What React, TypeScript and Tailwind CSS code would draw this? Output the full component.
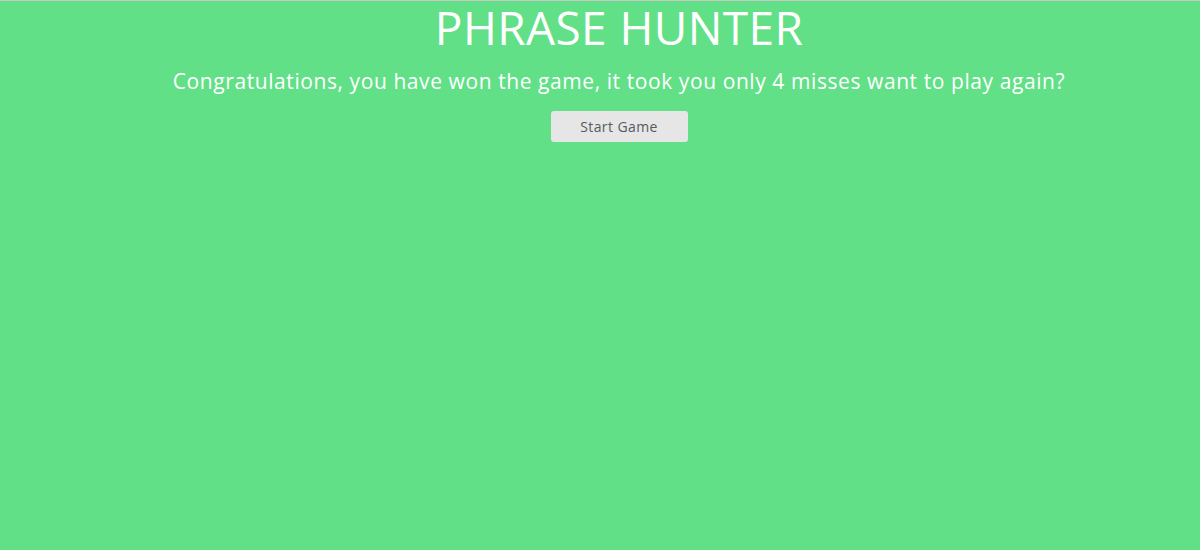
export default function App() {
  return (
    <div className="w-[1200px] h-[550px] bg-[#62e087] border-t border-[#c8c8c8] pl-[38px] flex flex-col items-center" style={{ fontFamily: '"Open Sans", sans-serif' }}>
      <h1 className="mt-[1px] text-[46px] leading-[50px] text-white font-normal tracking-[0.4px]">PHRASE HUNTER</h1>
      <p className="mt-[13px] text-[21px] leading-[32px] text-white tracking-[0.58px]">Congratulations, you have won the game, it took you only 4 misses want to play again?</p>
      <button className="mt-[14px] w-[137px] h-[31px] rounded-[3px] bg-[#e6e6e6] text-[14px] text-[#555a60] tracking-[0.4px]">Start Game</button>
    </div>
  );
}
